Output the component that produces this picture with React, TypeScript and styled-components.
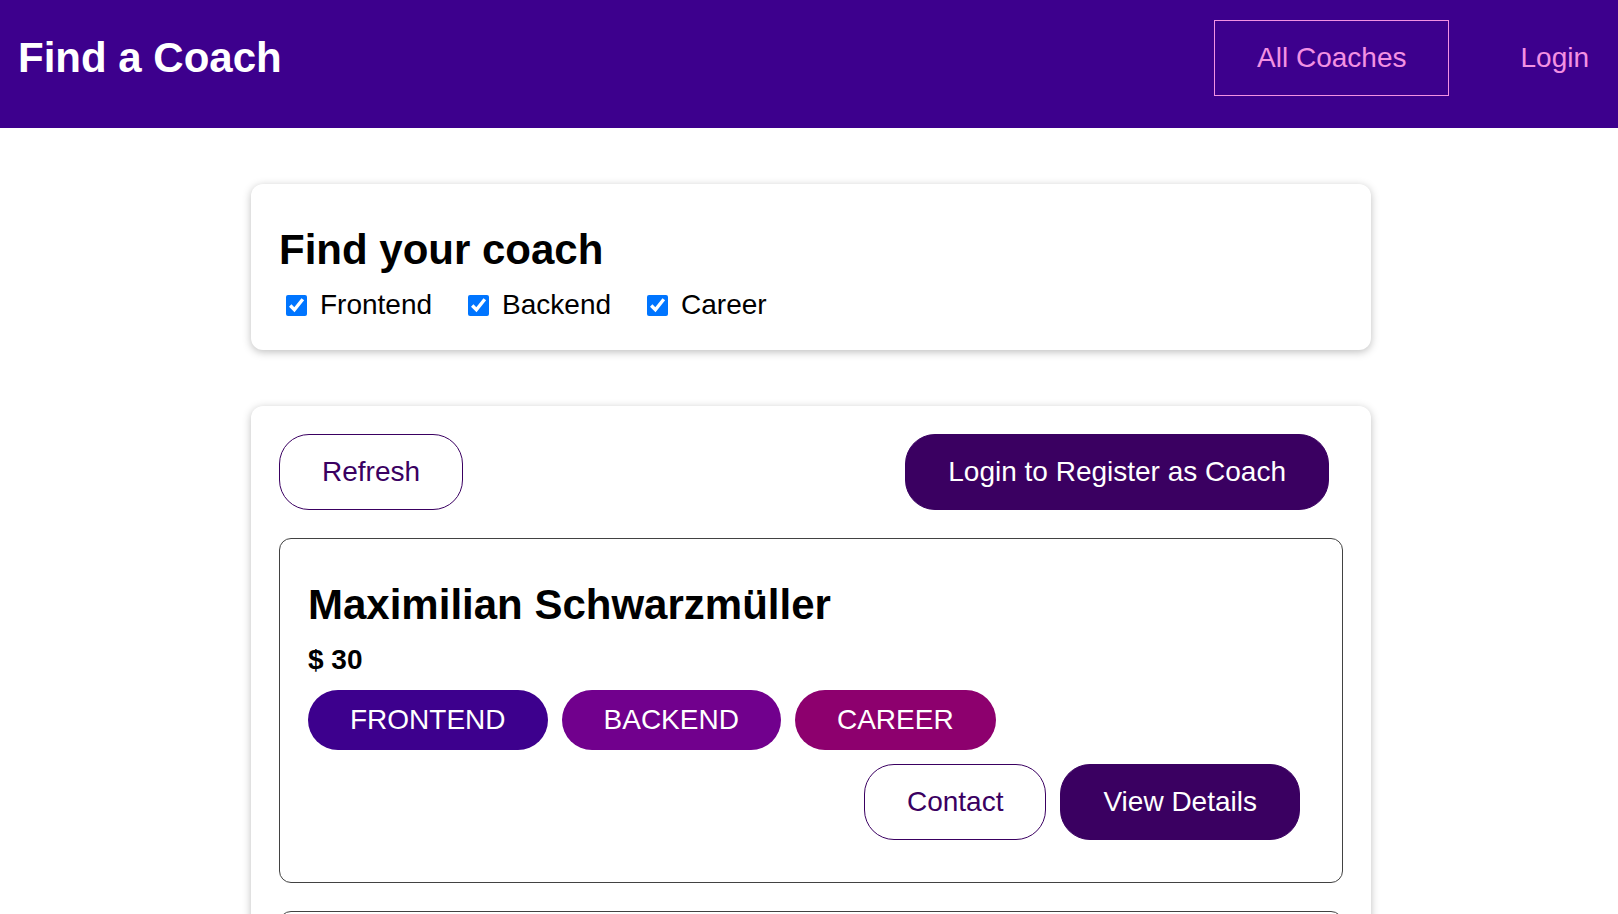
import React from 'react';
import styled, { createGlobalStyle, css } from 'styled-components';

const GlobalStyle = createGlobalStyle`
  * {
    box-sizing: border-box;
  }

  html {
    font-family: 'Liberation Sans', Arial, sans-serif;
    font-size: 28px;
  }

  body {
    margin: 0;
    overflow-x: hidden;
  }
`;

const Header = styled.header`
  width: 100%;
  height: 128px;
  padding: 0 0 12px 18px;
  background-color: #3d008d;
  display: flex;
  align-items: center;
`;

const Nav = styled.nav`
  width: 100%;
  display: flex;
  justify-content: space-between;
  align-items: center;
`;

const Brand = styled.h1`
  margin: 0;
  font-size: 42px;
  font-weight: 700;

  a {
    color: white;
    text-decoration: none;
  }
`;

const NavList = styled.ul`
  list-style: none;
  margin: 0;
  padding: 0;
  display: flex;
  align-items: center;
  gap: 28px;
`;

const NavLink = styled.a<{ $active?: boolean }>`
  display: inline-block;
  padding: 0.75rem 1.5rem;
  color: #f391e3;
  text-decoration: none;
  line-height: 1.15;
  border: 1px solid transparent;

  ${props =>
    props.$active &&
    css`
      border-color: #f391e3;
    `};

  li:last-child & {
    padding-right: 28px;
  }
`;

const Main = styled.main`
  padding-left: 4px;
`;

const Card = styled.section`
  max-width: 40rem;
  margin: 2rem auto;
  padding: 1rem;
  border-radius: 12px;
  background: white;
  box-shadow: 0 2px 8px rgba(0, 0, 0, 0.26);
`;

const FilterTitle = styled.h2`
  margin: 0.5rem 0;
  font-size: 42px;
  line-height: 1.15;
`;

const FilterRow = styled.div`
  height: 34px;
  display: flex;
  align-items: center;
  gap: 29px;
`;

const FilterOption = styled.span`
  display: flex;
  align-items: center;
`;

const Checkbox = styled.input`
  width: 21px;
  height: 21px;
  margin: 0 13px 0 7px;
  accent-color: #0075ff;
`;

const FilterLabel = styled.label`
  line-height: 1.15;
  color: #000;
`;

const Controls = styled.div`
  display: flex;
  justify-content: space-between;
`;

const Button = styled.a<{ $outline?: boolean }>`
  display: inline-block;
  padding: 0.75rem 1.5rem;
  margin-right: 0.5rem;
  font: inherit;
  line-height: 1.15;
  text-decoration: none;
  cursor: pointer;
  border: 1px solid #3a0061;
  border-radius: 30px;
  background-color: ${props => (props.$outline ? 'transparent' : '#3a0061')};
  color: ${props => (props.$outline ? '#3a0061' : 'white')};
`;

const CoachList = styled.ul`
  list-style: none;
  margin: 0;
  padding: 0;
`;

const CoachItem = styled.li`
  margin: 1rem 0;
  padding: 1rem;
  border: 1px solid #424242;
  border-radius: 12px;
`;

const CoachName = styled.h3`
  margin: 0.5rem 0;
  font-size: 1.5rem;
  line-height: 1.15;
`;

const Rate = styled.h4`
  margin: 0.5rem 0;
  font-size: 1rem;
  line-height: 1.15;
`;

const Badges = styled.div`
  display: flex;
`;

const areaColors: Record<string, string> = {
  frontend: '#3d008d',
  backend: '#71008d',
  career: '#8d006e',
};

const Badge = styled.span<{ $area: string }>`
  display: inline-block;
  padding: 0.5rem 1.5rem;
  margin-right: 0.5rem;
  border-radius: 30px;
  line-height: 1.15;
  background-color: ${props => areaColors[props.$area] ?? '#ccc'};
  color: white;
`;

const Actions = styled.div`
  margin: 0.5rem 0;
  display: flex;
  justify-content: flex-end;
`;

const coaches = [
  { id: 'c1', name: 'Maximilian Schwarzmüller', rate: 30, areas: ['frontend', 'backend', 'career'] },
  { id: 'c2', name: 'Julie Jones', rate: 30, areas: ['frontend', 'career'] },
];

const filters = [
  { id: 'frontend', label: 'Frontend' },
  { id: 'backend', label: 'Backend' },
  { id: 'career', label: 'Career' },
];

export default function App() {
  return (
    <>
      <GlobalStyle />
      <Header>
        <Nav>
          <Brand>
            <a href="#">Find a Coach</a>
          </Brand>
          <NavList>
            <li>
              <NavLink href="#" $active>
                All Coaches
              </NavLink>
            </li>
            <li>
              <NavLink href="#">Login</NavLink>
            </li>
          </NavList>
        </Nav>
      </Header>
      <Main>
        <Card>
          <FilterTitle>Find your coach</FilterTitle>
          <FilterRow>
            {filters.map(f => (
              <FilterOption key={f.id}>
                <Checkbox type="checkbox" id={f.id} defaultChecked />
                <FilterLabel htmlFor={f.id}>{f.label}</FilterLabel>
              </FilterOption>
            ))}
          </FilterRow>
        </Card>
        <Card>
          <Controls>
            <Button as="button" $outline>
              Refresh
            </Button>
            <Button href="#">Login to Register as Coach</Button>
          </Controls>
          <CoachList>
            {coaches.map(coach => (
              <CoachItem key={coach.id}>
                <CoachName>{coach.name}</CoachName>
                <Rate>$ {coach.rate}</Rate>
                <Badges>
                  {coach.areas.map(area => (
                    <Badge key={area} $area={area}>
                      {area.toUpperCase()}
                    </Badge>
                  ))}
                </Badges>
                <Actions>
                  <Button href="#" $outline>
                    Contact
                  </Button>
                  <Button href="#">View Details</Button>
                </Actions>
              </CoachItem>
            ))}
          </CoachList>
        </Card>
      </Main>
    </>
  );
}
